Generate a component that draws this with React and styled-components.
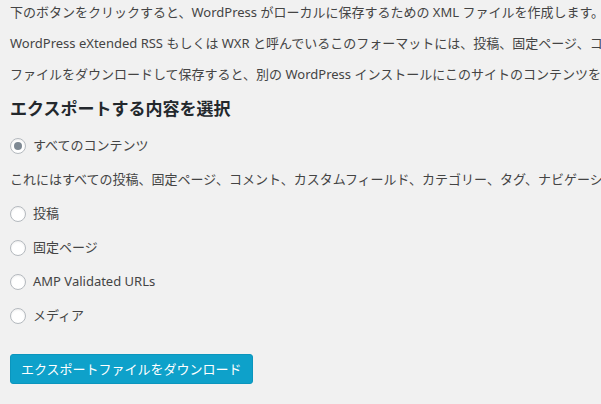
import React from "react";
import styled, { createGlobalStyle } from "styled-components";

const GlobalStyle = createGlobalStyle`
  html, body {
    margin: 0;
    padding: 0;
    background: #f1f1f1;
    overflow: hidden;
  }
  body {
    font-family: "Noto Sans", "Noto Sans CJK JP", sans-serif;
    font-size: 13px;
    color: #444;
  }
`;

const Wrap = styled.div`
  padding: 3px 0 0 10px;
  white-space: nowrap;
`;

const Text = styled.p`
  margin: 0 0 12px;
  line-height: 19px;
`;

const Heading = styled.h2`
  margin: 13px 0 15px;
  font-size: 17px;
  line-height: 24px;
  font-weight: 700;
  color: #23282d;
`;

const Options = styled.fieldset`
  margin: 0;
  padding: 0;
  border: 0;
  display: flex;
  flex-direction: column;
  gap: 15px;
`;

const Option = styled.label`
  display: flex;
  align-items: center;
  gap: 7px;
  height: 19px;
  line-height: 19px;
  cursor: pointer;
`;

const Radio = styled.span`
  box-sizing: border-box;
  width: 16px;
  height: 16px;
  border-radius: 50%;
  border: 1px solid #b4b9be;
  background: #fff;
  box-shadow: inset 0 1px 2px rgba(0, 0, 0, 0.07);
  display: flex;
  align-items: center;
  justify-content: center;
  &::after {
    content: "";
    display: ${(p) => (p.checked ? "block" : "none")};
    width: 8px;
    height: 8px;
    border-radius: 50%;
    background: #7e8993;
  }
`;

const Note = styled.p`
  margin: 0;
  line-height: 19px;
`;

const Submit = styled.button`
  margin-top: 29px;
  height: 30px;
  padding: 0 10px;
  border: 1px solid #0b95bd;
  border-radius: 3px;
  background: #0ea1ca;
  color: #fff;
  font-family: "Noto Sans", "Noto Sans CJK JP", sans-serif;
  font-size: 13px;
  line-height: 28px;
  cursor: pointer;
`;

const items = [
  { label: "すべてのコンテンツ", checked: true },
  { note: "これにはすべての投稿、固定ページ、コメント、カスタムフィールド、カテゴリー、タグ、ナビゲーションメニュー、カスタム投稿が含まれます。" },
  { label: "投稿" },
  { label: "固定ページ" },
  { label: "AMP Validated URLs" },
  { label: "メディア" },
];

export default function App() {
  return (
    <Wrap>
      <GlobalStyle />
      <Text>下のボタンをクリックすると、WordPress がローカルに保存するための XML ファイルを作成します。</Text>
      <Text>WordPress eXtended RSS もしくは WXR と呼んでいるこのフォーマットには、投稿、固定ページ、コメント、カスタムフィールド、カテゴリー、タグが含まれます。</Text>
      <Text>ファイルをダウンロードして保存すると、別の WordPress インストールにこのサイトのコンテンツを一括インポートすることができます。</Text>
      <Heading>エクスポートする内容を選択</Heading>
      <Options>
        {items.map((it, i) =>
          it.note ? (
            <Note key={i}>{it.note}</Note>
          ) : (
            <Option key={i}>
              <Radio checked={it.checked} />
              {it.label}
            </Option>
          )
        )}
      </Options>
      <Submit>エクスポートファイルをダウンロード</Submit>
    </Wrap>
  );
}
